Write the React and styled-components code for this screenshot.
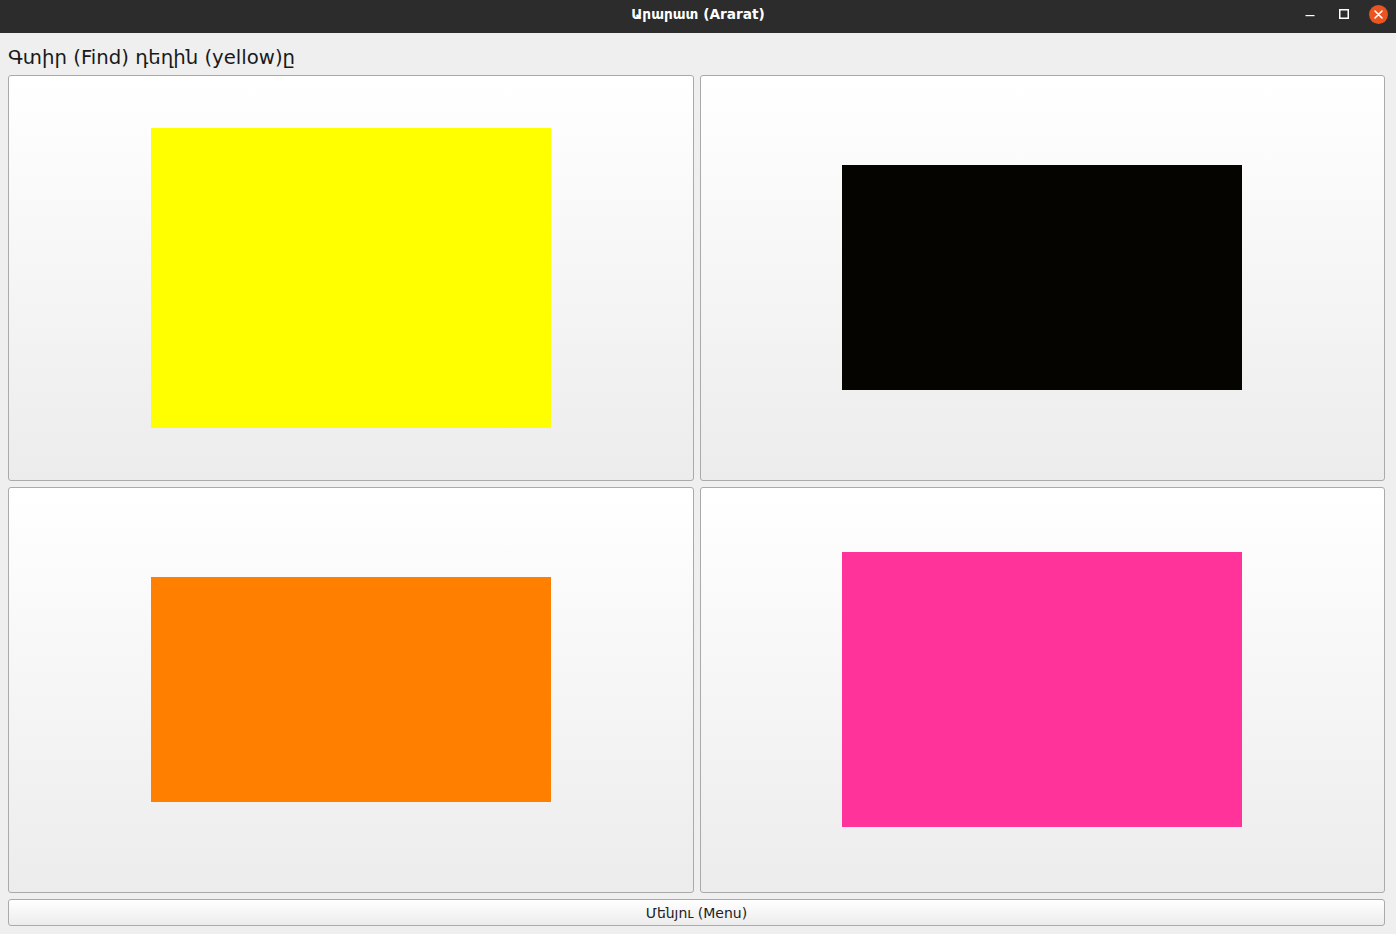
import React from "react";
import styled, { createGlobalStyle } from "styled-components";

const GlobalStyle = createGlobalStyle`
  html, body {
    margin: 0;
    padding: 0;
    background: #efefef;
    font-family: "DejaVu Sans", "Noto Sans", sans-serif;
  }
  #root {
    height: 100vh;
  }
`;

const Window = styled.div`
  height: 100vh;
  display: flex;
  flex-direction: column;
  background: #efefef;
  overflow: hidden;
`;

const TitleBar = styled.div`
  height: 33px;
  box-sizing: border-box;
  padding-bottom: 5px;
  flex: none;
  background: #2c2c2c;
  display: grid;
  grid-template-columns: 1fr auto 1fr;
  align-items: center;
`;

const Title = styled.div`
  grid-column: 2;
  color: #ffffff;
  font-size: 13.7px;
  font-weight: bold;
`;

const Controls = styled.div`
  grid-column: 3;
  justify-self: end;
  display: flex;
  align-items: center;
  padding-right: 1px;
`;

const Ctrl = styled.div`
  width: 34px;
  height: 28px;
  display: flex;
  align-items: center;
  justify-content: center;
`;

const CloseDot = styled.div`
  width: 19px;
  height: 19px;
  border-radius: 50%;
  background: #e95420;
  display: flex;
  align-items: center;
  justify-content: center;
`;

const Body = styled.div`
  flex: 1;
  display: flex;
  flex-direction: column;
  padding: 0 11px 8px 8px;
  min-height: 0;
`;

const Prompt = styled.div`
  padding: 12.5px 0 5.5px;
  line-height: 24px;
  font-size: 19.7px;
  color: #1a1a1a;
`;

const Grid = styled.div`
  flex: 1;
  display: grid;
  grid-template-columns: 686fr 685fr;
  grid-template-rows: 1fr 1fr;
  gap: 6px;
`;

const Choice = styled.button`
  border: 1px solid #aaaaaa;
  border-radius: 3px;
  background: linear-gradient(to bottom, #ffffff 0%, #ececec 100%);
  display: flex;
  align-items: center;
  justify-content: center;
  padding: 0 0 1px 0;
  cursor: pointer;
  &:nth-child(2n) {
    padding-right: 1px;
  }
`;

const Swatch = styled.div`
  width: 400px;
  height: ${(p) => p.$h}px;
  background: ${(p) => p.$color};
`;

const MenuButton = styled.button`
  margin-top: 6px;
  height: 27px;
  border: 1px solid #aaaaaa;
  border-radius: 3px;
  background: linear-gradient(to bottom, #ffffff 0%, #ececec 100%);
  font-family: "DejaVu Sans", "Noto Sans", sans-serif;
  font-size: 14px;
  color: #222222;
  padding: 0;
  cursor: pointer;
`;

const choices = [
  { color: "#ffff00", h: 300 },
  { color: "#050400", h: 225 },
  { color: "#ff7f00", h: 225 },
  { color: "#ff3399", h: 275 },
];

const App = () => {
  return (
    <Window>
      <GlobalStyle />
      <TitleBar>
        <Title>Արարատ (Ararat)</Title>
        <Controls>
          <Ctrl>
            <svg width="10" height="10" viewBox="0 0 10 10">
              <rect x="0.5" y="6" width="9" height="1.2" fill="#ffffff" />
            </svg>
          </Ctrl>
          <Ctrl>
            <svg width="10" height="10" viewBox="0 0 10 10">
              <rect x="0.75" y="0.75" width="8.5" height="8.5" fill="none" stroke="#ffffff" strokeWidth="1.5" />
            </svg>
          </Ctrl>
          <Ctrl>
            <CloseDot>
              <svg width="9" height="9" viewBox="0 0 9 9">
                <path d="M1 1 L8 8 M8 1 L1 8" stroke="#ffffff" strokeWidth="1.6" strokeLinecap="round" />
              </svg>
            </CloseDot>
          </Ctrl>
        </Controls>
      </TitleBar>
      <Body>
        <Prompt>Գտիր (Find) դեղին (yellow)ը</Prompt>
        <Grid>
          {choices.map((c, i) => (
            <Choice key={i}>
              <Swatch $color={c.color} $h={c.h} />
            </Choice>
          ))}
        </Grid>
        <MenuButton>Մենյու (Menu)</MenuButton>
      </Body>
    </Window>
  );
};

export default App;
